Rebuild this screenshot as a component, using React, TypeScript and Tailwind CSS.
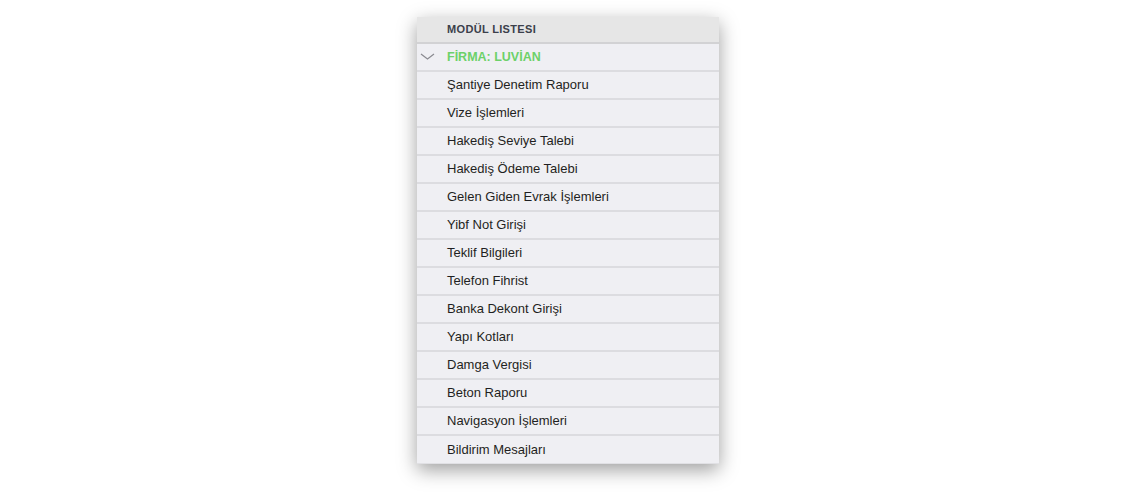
const ITEMS = [
  'Şantiye Denetim Raporu',
  'Vize İşlemleri',
  'Hakediş Seviye Talebi',
  'Hakediş Ödeme Talebi',
  'Gelen Giden Evrak İşlemleri',
  'Yibf Not Girişi',
  'Teklif Bilgileri',
  'Telefon Fihrist',
  'Banka Dekont Girişi',
  'Yapı Kotları',
  'Damga Vergisi',
  'Beton Raporu',
  'Navigasyon İşlemleri',
  'Bildirim Mesajları',
]

export default function App() {
  return (
    <div className="w-[1140px] h-[499px] bg-white flex justify-center pt-[17px] font-[Liberation_Sans,Arial,sans-serif]">
      <div className="w-[302px] h-fit bg-[#efeff3] shadow-[0_6px_18px_rgba(0,0,0,0.38)] translate-x-[-2px]">
        {/* header */}
        <div className="h-[27px] bg-[#e6e6e6] border-b-2 border-[#d2d2d4] flex items-center pl-[30px]">
          <span className="text-[11px] font-bold tracking-[0.03em] text-[#3b404b]">MODÜL LISTESI</span>
        </div>

        {/* firma row */}
        <div className="h-[28px] border-b-2 border-[#dcdce0] flex items-center">
          <svg width="30" height="28" viewBox="0 0 30 28" className="shrink-0">
            <path d="M4 11 L10.5 16 L17 11" fill="none" stroke="#8a8a90" strokeWidth="1.2" />
          </svg>
          <span className="text-[12.5px] font-bold text-[#6cd169]">FİRMA: LUVİAN</span>
        </div>

        {ITEMS.map((item, i) => (
          <div
            key={item}
            className={`h-[28px] flex items-center pl-[30px] ${i < ITEMS.length - 1 ? 'border-b-2 border-[#dcdce0]' : 'border-b border-[#e0e0e4]'}`}
          >
            <span className="text-[13px] text-[#1f1f22]">{item}</span>
          </div>
        ))}
      </div>
    </div>
  )
}
